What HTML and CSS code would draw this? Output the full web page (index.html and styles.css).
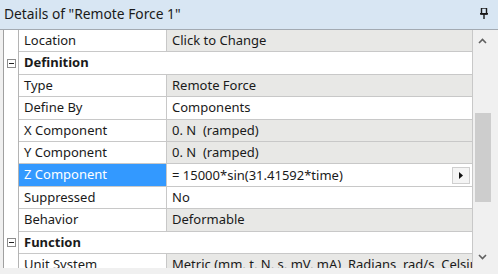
FILE: index.html
```html
<!DOCTYPE html>
<html>
<head lang="en">
  <meta charset="UTF-8">
  <title>Details</title>
  <link rel="stylesheet" href="styles.css">
</head>
<body>

<div class="panel">
  <!-- 标题栏 -->
  <div class="titlebar">
    <span class="title">Details of "Remote Force 1"</span>
    <svg class="pin" width="8" height="11" viewBox="0 0 8 11">
      <rect x="0" y="5" width="8" height="1.6" fill="#1a1a1a"/>
      <rect x="1.5" y="0" width="5" height="6" fill="none" stroke="#1a1a1a" stroke-width="1.4"/>
      <rect x="3.3" y="6" width="1.4" height="5" fill="#1a1a1a"/>
    </svg>
  </div>

  <div class="body">
    <!-- 属性表格 -->
    <div class="grid">
      <div class="row">
        <div class="gut"></div><div class="name">Location</div><div class="val ro">Click to Change</div>
      </div>
      <div class="row group">
        <div class="gut"><span class="tog"></span></div><div class="name">Definition</div>
      </div>
      <div class="row">
        <div class="gut"></div><div class="name">Type</div><div class="val ro">Remote Force</div>
      </div>
      <div class="row">
        <div class="gut"></div><div class="name">Define By</div><div class="val">Components</div>
      </div>
      <div class="row">
        <div class="gut"></div><div class="name">X Component</div><div class="val ro">0. N&nbsp; (ramped)</div>
      </div>
      <div class="row">
        <div class="gut"></div><div class="name">Y Component</div><div class="val ro">0. N&nbsp; (ramped)</div>
      </div>
      <div class="row">
        <div class="gut"></div><div class="name sel">Z Component</div>
        <div class="val edit">
          <span>= 15000*sin(31.41592*time)</span>
          <span class="dd"><svg width="4" height="7" viewBox="0 0 4 7"><path d="M0 0 L4 3.5 L0 7 Z" fill="#111"/></svg></span>
        </div>
      </div>
      <div class="row">
        <div class="gut"></div><div class="name">Suppressed</div><div class="val">No</div>
      </div>
      <div class="row">
        <div class="gut"></div><div class="name">Behavior</div><div class="val ro">Deformable</div>
      </div>
      <div class="row group">
        <div class="gut"><span class="tog"></span></div><div class="name">Function</div>
      </div>
      <div class="row">
        <div class="gut"></div><div class="name">Unit System</div><div class="val ro">Metric (mm, t, N, s, mV, mA)&nbsp; Radians&nbsp; rad/s&nbsp; Celsius</div>
      </div>
    </div>

    <!-- 右侧滚动条 -->
    <div class="scrollbar">
      <div class="arrow">
        <svg width="9" height="6" viewBox="0 0 9 6"><path d="M1 5 L4.5 1.5 L8 5" fill="none" stroke="#606060" stroke-width="1.6"/></svg>
      </div>
      <div class="track"><div class="thumb"></div></div>
      <div class="arrow">
        <svg width="9" height="6" viewBox="0 0 9 6"><path d="M1 1 L4.5 4.5 L8 1" fill="none" stroke="#606060" stroke-width="1.6"/></svg>
      </div>
    </div>
  </div>
</div>

</body>
</html>
```

FILE: styles.css
```css
* {
  margin: 0;
  padding: 0;
  box-sizing: border-box;
}

body {
  background: #f0f0f0;
  font-family: "Noto Sans", "Open Sans", sans-serif;
  font-size: 13px;
  color: #1a1a1a;
}

.panel {
  width: 498px;
  height: 274px;
  overflow: hidden;
}

.titlebar {
  height: 30px;
  background: #d8e6f3;
  border-bottom: 1px solid #a3aab2;
  display: flex;
  align-items: center;
  justify-content: space-between;
  padding: 0 10px 2px 4px;
}

.title {
  font-size: 13.8px;
}

.body {
  display: flex;
  height: 238px;
  padding-left: 3px;
}

.grid {
  width: 470px;
  height: 238px;
  overflow: hidden;
  background: #fff;
  border-left: 1px solid #a0a0a0;
  border-right: 1px solid #c8c8c8;
}

.row {
  display: grid;
  grid-template-columns: 15px 148px 1fr;
  height: 22.4px;
}

.gut {
  border-right: 1px solid #b4b4b4;
  display: flex;
  align-items: center;
  justify-content: center;
  padding-left: 1px;
}

.tog {
  width: 9px;
  height: 9px;
  border: 1px solid #8c8c8c;
  background: #fff;
  display: flex;
  align-items: center;
  justify-content: center;
}

.tog::after {
  content: "";
  width: 5px;
  height: 1px;
  background: #222;
}

.name,
.val {
  border-bottom: 1px solid #c8c8c8;
  padding-left: 5px;
  line-height: 21px;
  white-space: nowrap;
  overflow: hidden;
}

.name {
  border-right: 1px solid #c8c8c8;
}

.group .name {
  grid-column: 2 / 4;
  border-right: none;
  font-weight: bold;
}

.val.ro {
  background: #e8e8e6;
}

.name.sel {
  background: #3399ff;
  color: #fff;
}

.val.edit {
  display: flex;
  justify-content: space-between;
  align-items: center;
  padding-right: 2px;
}

.dd {
  width: 18px;
  height: 17px;
  border: 1px solid #cfcfcf;
  background: #f4f4f4;
  display: flex;
  align-items: center;
  justify-content: center;
}

.scrollbar {
  width: 19px;
  display: flex;
  flex-direction: column;
  background: #f0f0f0;
}

.arrow {
  height: 22px;
  display: flex;
  align-items: center;
  justify-content: center;
}

.track {
  flex: 1;
  padding: 61px 1px 0 2px;
}

.thumb {
  height: 89px;
  background: #cdcdcd;
}
```
